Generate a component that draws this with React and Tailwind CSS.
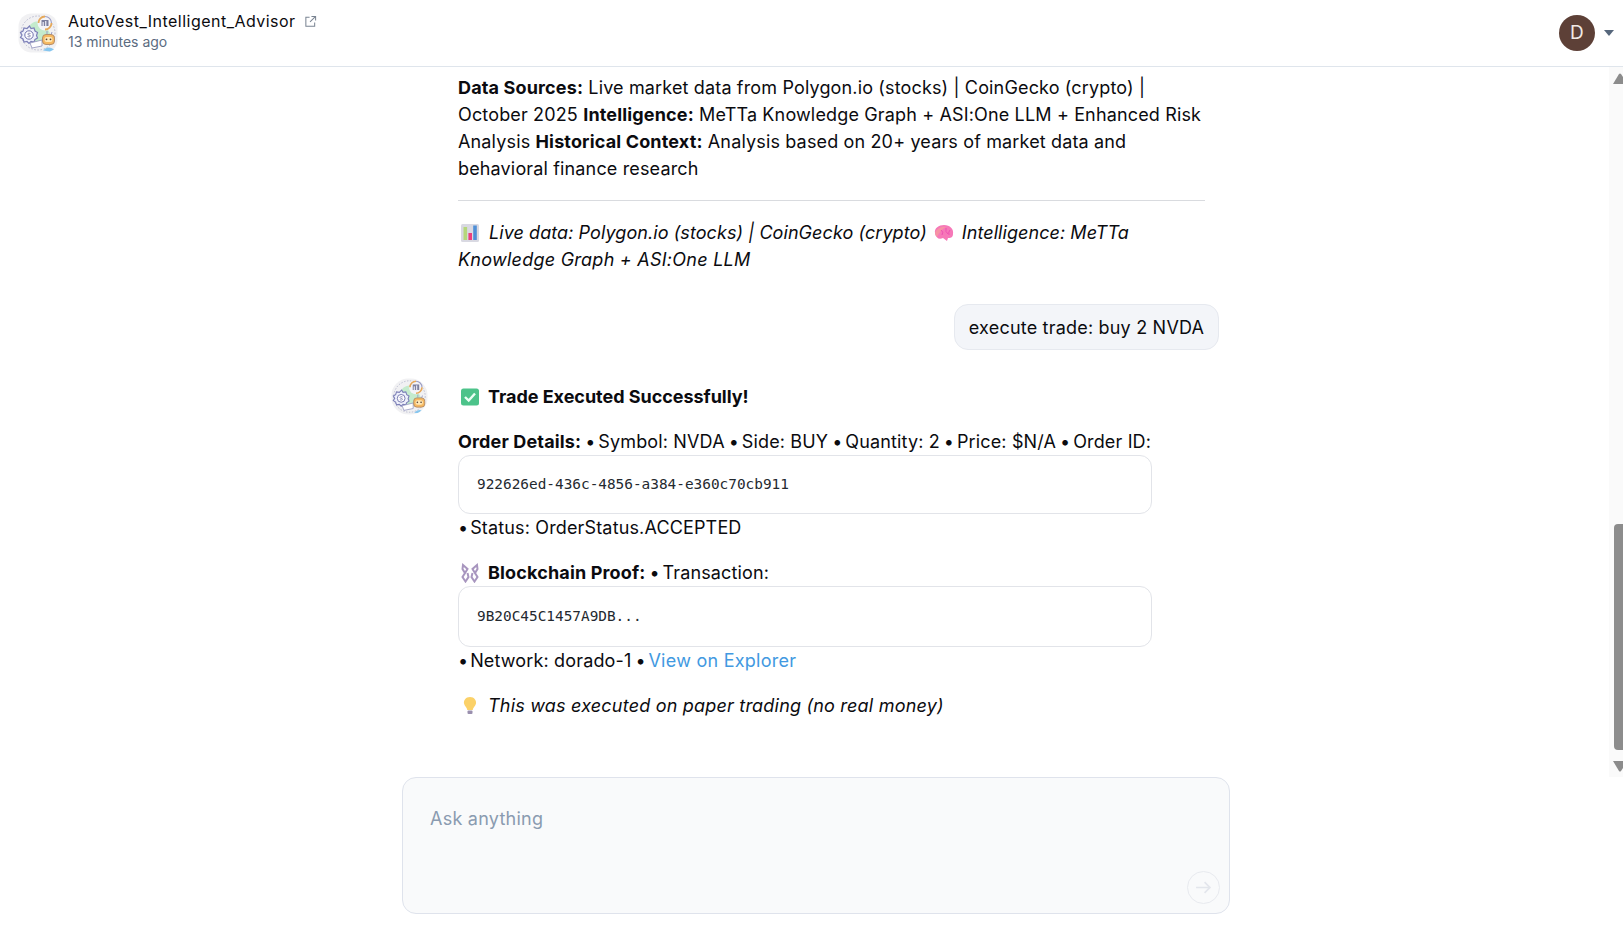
const FONT = "font-['Inter','Noto_Sans',sans-serif]"

const BotAvatar = ({ className }) => (
    <svg viewBox="0 0 40 40" className={className}>
        <rect x="0.5" y="0.5" width="39" height="39" rx="13" fill="#f1f1f3" />
        <path d="M9 17 C12 9 20 6 26 10 L33 22 L22 32 L12 27 Z" fill="#c4ebcd" />
        <circle cx="20" cy="20" r="17" fill="none" stroke="#a5a6c2" strokeWidth="0.7" strokeDasharray="1.6 1.6" />
        <circle cx="27" cy="10" r="7.5" fill="#f4f4f8" />
        <path d="M20.5 10 A6.5 6.5 0 0 1 27 3.5" fill="none" stroke="#e6a95a" strokeWidth="1.8" />
        <path d="M33.5 10 A6.5 6.5 0 0 1 27 16.5" fill="none" stroke="#e6a95a" strokeWidth="1.8" />
        <path d="M27 3.5 A6.5 6.5 0 0 1 33.5 10" fill="none" stroke="#9d9fc4" strokeWidth="1.2" />
        <rect x="23.5" y="7" width="7" height="6" fill="#7c7f9e" />
        <rect x="24.5" y="9" width="1.4" height="4" fill="#e0e1ee" />
        <rect x="27" y="8" width="1.4" height="5" fill="#e0e1ee" />
        <path d="M11.5 13 L13 15.5 L16 15 L17 18 L19.5 19.5 L18.5 22.5 L19.5 25 L17 26.5 L16 29 L13 28.5 L11 30.5 L9 28.5 L6 29 L5 26 L2.5 24.5 L4 22 L2.5 19.5 L5 18 L6 15 L9 15.5 Z" fill="#eef0fb" stroke="#7d80b8" strokeWidth="1.2" />
        <circle cx="11" cy="22" r="4.2" fill="#fff" stroke="#6f72ad" strokeWidth="1" />
        <path d="M12.5 20.5 Q10 19.5 9.7 21 Q9.8 22 11 22 Q12.7 22.3 12.3 23.3 Q11.5 24.5 9.5 23.5" fill="none" stroke="#5f6199" strokeWidth="0.7" />
        <path d="M12 30 L24 27 L24 33 L14 35 Z" fill="#ffffff" stroke="#8f92bd" strokeWidth="0.8" />
        <path d="M29 18 V21 M34 19 L33 22" stroke="#9a9cc4" strokeWidth="1" />
        <rect x="24.5" y="21.5" width="12" height="10" rx="3.5" fill="#f6b962" stroke="#a77f5f" strokeWidth="0.8" />
        <rect x="26.5" y="24" width="8" height="5" rx="2.2" fill="#ffe9b8" />
        <circle cx="28.5" cy="26.3" r="0.9" fill="#5e4636" />
        <circle cx="32.5" cy="26.3" r="0.9" fill="#5e4636" />
        <path d="M25 37.5 Q30 32 36 36.5 L32 38.5 Z" fill="#86c6ef" />
    </svg>
)

const ChartEmoji = () => (
    <svg viewBox="0 0 20 20" className="inline-block align-[-4px] w-5 h-5 ml-[2px]">
        <rect x="1" y="1" width="18" height="18" rx="1.5" fill="#d9d9e2" />
        <rect x="3.5" y="4" width="3.6" height="13" fill="#b5d77a" />
        <rect x="8.4" y="10" width="3.6" height="7" fill="#ec3f7c" />
        <rect x="13.2" y="2.5" width="3.6" height="14.5" fill="#4f8fd6" />
    </svg>
)

const BrainEmoji = () => (
    <svg viewBox="0 0 20 20" className="inline-block align-[-4px] w-5 h-5">
        <path d="M1 10 C0 5 5 2 10 2 C16 2 20 6 19 11 C19 15 16 15 14 15 L13 18 L9 15 C5 17 2 15 1 10 Z" fill="#f678b8" />
        <path d="M1 10 C2 6 8 3 12 4 C8 6 5 10 3 14 C2 13 1 12 1 10 Z" fill="#f693a5" />
        <path d="M7 7 Q10 9 8 12 M12 5 Q11 9 14 11 M16 7 Q14 9 15 12" fill="none" stroke="#ee4fb2" strokeWidth="1" />
    </svg>
)

const CheckEmoji = () => (
    <svg viewBox="0 0 20 20" className="inline-block align-[-4px] w-5 h-5 ml-[2px]">
        <rect x="1" y="1.5" width="18" height="17" rx="2.5" fill="#4cc38a" />
        <path d="M5 10 L8.7 13.6 L15 6.5" fill="none" stroke="#eafff4" strokeWidth="2.4" />
    </svg>
)

const ChainEmoji = () => (
    <svg viewBox="0 0 20 20" className="inline-block align-[-4px] w-5 h-5 ml-[2px]">
        <g fill="none" stroke="#a896bf" strokeWidth="2">
            <path d="M3 2 L7.5 6 L5 10 L2.5 6 Z M7.5 10 L8.5 14 L5.5 18.5 L2.5 14 L5 10" />
            <path d="M17 2 L12.5 6 L15 10 L17.5 6 Z M12.5 10 L11.5 14 L14.5 18.5 L17.5 14 L15 10" />
        </g>
    </svg>
)

const BulbEmoji = () => (
    <svg viewBox="0 0 20 20" className="inline-block align-[-4px] w-5 h-5 ml-[2px]">
        <path d="M10 1 C5.5 1 3.5 4.5 4 7.5 C4.5 10 7 11.5 7.3 14 L12.7 14 C13 11.5 15.5 10 16 7.5 C16.5 4.5 14.5 1 10 1 Z" fill="#fbd168" />
        <rect x="7.5" y="14.5" width="5" height="3.5" rx="1" fill="#9a8fae" />
    </svg>
)

const CodeBox = ({ children, className }) => (
    <div className={`border border-[#e2e4e9] rounded-[12px] pl-[18px] flex items-center font-['DejaVu_Sans_Mono',monospace] text-[14.4px] tracking-[0px] text-[#24292f] w-[694px] ${className}`}>
        {children}
    </div>
)

const Line = ({ children, className = '' }) => (
    <p className={`h-[27px] leading-[27px] whitespace-pre ${className}`}>{children}</p>
)

// bullet glyph runs wider in this font than in the original
const Dot = () => <span className="tracking-[-1.07px]">{' • '}</span>
const LeadDot = () => <span className="tracking-[-3.2px]">•</span>

export default function App() {
    return (
        <div className={`w-[1623px] h-[936px] overflow-hidden bg-white flex flex-col text-[#0b0b0f] ${FONT} text-[18px] font-normal tracking-[0.15px]`}>
            {/* Header */}
            <header className="h-[67px] shrink-0 border-b border-[#dfe5ec] flex items-center pl-[18px] pr-[8px]">
                <BotAvatar className="w-10 h-10 shrink-0" />
                <div className="ml-[10px] -mt-[4px]">
                    <div className="flex items-center h-[22px] text-[16px] tracking-[0.48px] text-[#0b0b0f]">
                        <span>AutoVest_Intelligent_Advisor</span>
                        <svg viewBox="0 0 14 14" className="w-[13px] h-[13px] ml-[8px] text-[#7a8492]" fill="none" stroke="currentColor" strokeWidth="1.1">
                            <path d="M6 2.5H2v9.5h9.5V8M8 1.5h4.5V6M12.5 1.5L6.5 7.5" />
                        </svg>
                    </div>
                    <div className="text-[14px] leading-[20px] tracking-[0px] text-[#5b6b80]">13 minutes ago</div>
                </div>
                <div className="ml-auto flex items-center">
                    <div className="w-9 h-9 rounded-full bg-[#5d4037] text-[#f2e9e4] flex items-center justify-center text-[19px]">D</div>
                    <svg viewBox="0 0 10 6" className="w-[10px] h-[6px] ml-[9px] mr-[1px]">
                        <path d="M0 0H10L5 6Z" fill="#56677c" />
                    </svg>
                </div>
            </header>

            {/* Conversation */}
            <div className="flex-1 min-h-0 flex relative">
                <main className="flex-1 pl-[391px] pt-[7px]">
                    <div className="pl-[67px] w-[828px]">
                        <Line><b className="font-bold">Data Sources:</b> Live market data from Polygon.io (stocks) | CoinGecko (crypto) |</Line>
                        <Line>October 2025 <b className="font-bold">Intelligence:</b> MeTTa Knowledge Graph + ASI:One LLM + Enhanced Risk</Line>
                        <Line>Analysis <b className="font-bold">Historical Context:</b> Analysis based on 20+ years of market data and</Line>
                        <Line>behavioral finance research</Line>
                        <div className="w-[747px] border-t border-[#d9dbdf] mt-[18px] mb-[18px]" />
                        <Line className="italic tracking-[0.07px]"><ChartEmoji /><span className="ml-[9px]">Live data: Polygon.io (stocks) | CoinGecko (crypto)</span><span className="ml-[7px]"><BrainEmoji /></span><span className="ml-[8px]">Intelligence: MeTTa</span></Line>
                        <Line className="italic tracking-[0.25px]">Knowledge Graph + ASI:One LLM</Line>
                    </div>

                    <div className="w-[828px] flex justify-end mt-[31px]">
                        <div className="h-[46px] w-[265px] rounded-[14px] bg-[#f3f5f9] border border-[#e6e9ef] flex items-center justify-center whitespace-pre tracking-[0.2px]">
                            execute trade: buy 2 NVDA
                        </div>
                    </div>

                    <div className="flex mt-[28px]">
                        <BotAvatar className="w-[37px] h-[37px] shrink-0 rounded-full" />
                        <div className="pl-[30px] pt-[5px]">
                            <Line className="font-bold tracking-[-0.03px]"><CheckEmoji /><span className="ml-[8px]">Trade Executed Successfully!</span></Line>
                            <Line className="mt-[18px]"><b className="font-bold">Order Details:</b><Dot />Symbol: NVDA<Dot />Side: BUY<Dot />Quantity: 2<Dot />Price: $N/A<Dot />Order ID:</Line>
                            <CodeBox className="h-[59px]">922626ed-436c-4856-a384-e360c70cb911</CodeBox>
                            <Line><LeadDot /> Status: OrderStatus.ACCEPTED</Line>
                            <Line className="mt-[18px]"><ChainEmoji /><b className="font-bold ml-[8px]">Blockchain Proof:</b><Dot />Transaction:</Line>
                            <CodeBox className="h-[61px]">9B20C45C1457A9DB...</CodeBox>
                            <Line><LeadDot /> Network: dorado-1<Dot /><a className="text-[#4299e1] tracking-[0.25px]">View on Explorer</a></Line>
                            <Line className="italic mt-[18px] tracking-[0.2px]"><BulbEmoji /><span className="ml-[8px]">This was executed on paper trading (no real money)</span></Line>
                        </div>
                    </div>
                </main>

                {/* Scrollbar sits over the page edge */}
                <div className="absolute right-0 top-0 w-[14px] h-full bg-[#fafafa] flex flex-col items-end">
                    <svg viewBox="0 0 10 11" className="w-[10px] h-[11px] mt-[6px]"><path d="M0 11L6 1Q7 0 8 1L10 4V11Z" fill="#8c8c8c" /></svg>
                    <div className="w-[9px] h-[226px] rounded-l-[4px] bg-[#8c8c8c] mt-auto mb-[11px]" />
                    <svg viewBox="0 0 10 11" className="w-[10px] h-[11px] mb-[5px]"><path d="M0 0H10V7L8 10Q7 11 6 10Z" fill="#8c8c8c" /></svg>
                </div>
            </div>

            {/* Composer */}
            <div className="h-[159px] shrink-0 pl-[402px]">
                <div className="w-[828px] h-[137px] rounded-[14px] border border-[#dfe3ec] bg-[#f9fafb] relative px-[27px] pt-[27px]">
                    <span className="text-[#8a9bb0] leading-[27px] tracking-[0.25px]">Ask anything</span>
                    <div className="absolute right-[9px] bottom-[9px] w-[33px] h-[33px] rounded-full border border-[#e8eaef] flex items-center justify-center">
                        <svg viewBox="0 0 16 16" className="w-[17px] h-[17px]" fill="none" stroke="#e3e6ec" strokeWidth="1.6">
                            <path d="M1 8H14M9 3L14 8L9 13" />
                        </svg>
                    </div>
                </div>
            </div>
        </div>
    )
}
